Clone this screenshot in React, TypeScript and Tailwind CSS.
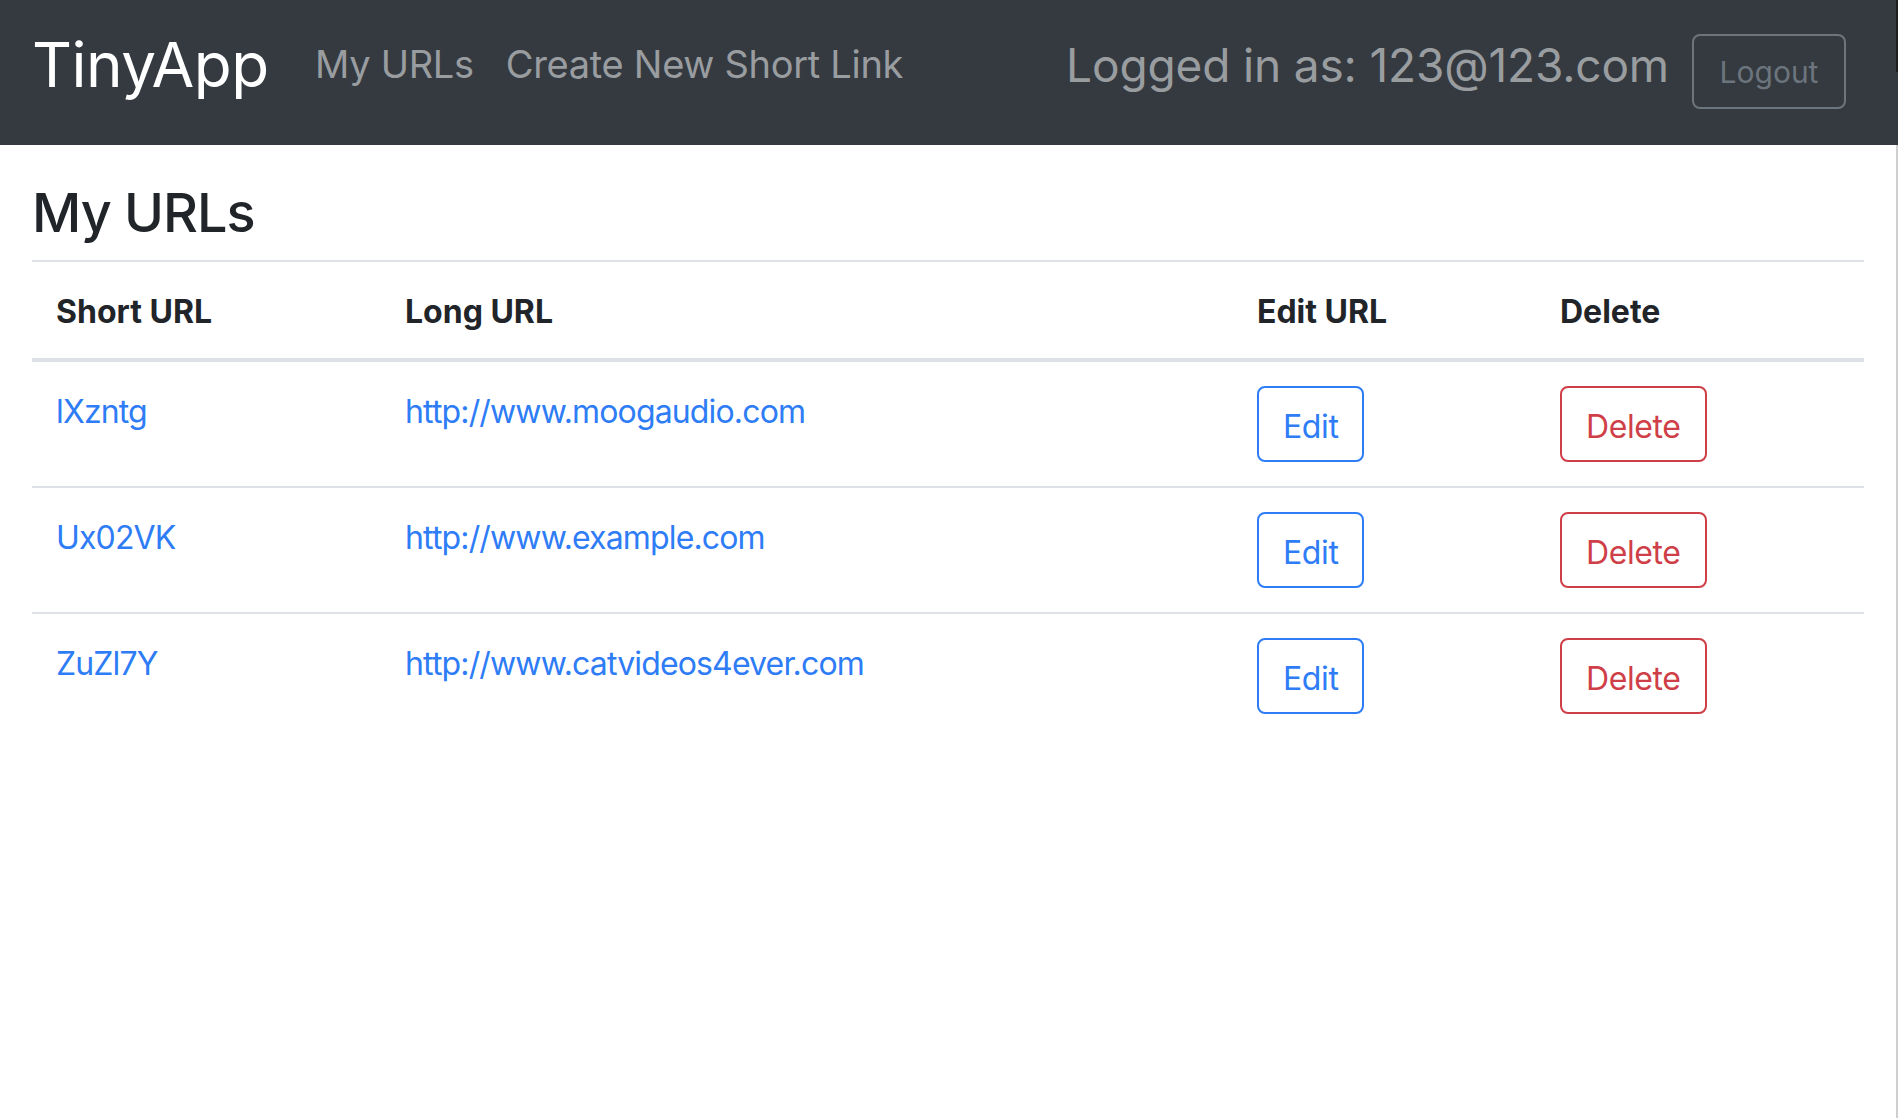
import React from "react";

const rows = [
  { short: "lXzntg", long: "http://www.moogaudio.com" },
  { short: "Ux02VK", long: "http://www.example.com" },
  { short: "ZuZl7Y", long: "http://www.catvideos4ever.com" },
];

export default function App() {
  return (
    <div className="flex min-h-screen w-full bg-white" style={{ fontFamily: "Inter, 'Open Sans', sans-serif" }}>
      <div className="flex-1 min-w-0">
        <nav className="flex h-[145px] items-start bg-[#343a40] pl-8 pr-[50px]">
          <a className="mt-[34px] w-[267px] text-[62px] leading-none tracking-[-0.5px] text-white">TinyApp</a>
          <a className="mt-[45px] px-4 text-[38px] leading-none tracking-[-0.3px] text-[#9a9da0]">My URLs</a>
          <a className="mt-[45px] px-4 text-[38px] leading-none tracking-[-0.3px] text-[#9a9da0]">Create New Short Link</a>
          <div className="ml-auto flex items-start">
            <span className="mt-[42px] text-[46px] leading-none tracking-[-0.15px] text-[#9a9da0]">
              Logged in as: 123@123.com
            </span>
            <button className="ml-[23px] mt-[34px] flex h-[75px] w-[154px] items-center justify-center rounded-[8px] border-2 border-[#6c757d] text-[30px] leading-none text-[#6c757d]">
              Logout
            </button>
          </div>
        </nav>
        <main className="px-8">
          <h1 className="mt-[41px] text-[54px] font-medium leading-none tracking-[-1px] text-[#212529]">My URLs</h1>
          <table className="mt-[20px] w-full table-fixed border-collapse text-[32px] leading-[48px] text-[#212529]">
            <colgroup>
              <col className="w-[349px]" />
              <col className="w-[852px]" />
              <col className="w-[303px]" />
              <col />
            </colgroup>
            <thead>
              <tr className="border-t-2 border-b-4 border-[#dee2e6]">
                <th className="px-6 pt-[26px] pb-[22px] text-left font-bold">Short URL</th>
                <th className="px-6 pt-[26px] pb-[22px] text-left font-bold">Long URL</th>
                <th className="px-6 pt-[26px] pb-[22px] text-left font-bold">Edit URL</th>
                <th className="px-6 pt-[26px] pb-[22px] text-left font-bold">Delete</th>
              </tr>
            </thead>
            <tbody>
              {rows.map((r, i) => (
                <tr key={r.short} className={i === 0 ? "" : "border-t-2 border-[#dee2e6]"}>
                  <td className="px-6 pt-[26px] pb-[22px] align-top tracking-[-0.85px]">
                    <a className="text-[#2e7cf6]">{r.short}</a>
                  </td>
                  <td className="px-6 pt-[26px] pb-[22px] align-top tracking-[-0.85px]">
                    <a className="text-[#2e7cf6]">{r.long}</a>
                  </td>
                  <td className="p-6 align-top">
                    <button className="flex h-[76px] items-center rounded-[8px] border-2 border-[#2e7cf6] px-[24px] pt-[5px] text-[32px] leading-[48px] tracking-[-0.4px] text-[#2e7cf6]">
                      Edit
                    </button>
                  </td>
                  <td className="p-6 align-top">
                    <button className="flex h-[76px] items-center rounded-[8px] border-2 border-[#cf3f48] px-[24px] pt-[5px] text-[32px] leading-[48px] tracking-[-0.4px] text-[#cf3f48]">
                      Delete
                    </button>
                  </td>
                </tr>
              ))}
            </tbody>
          </table>
        </main>
      </div>
      <div className="flex w-[2px] flex-col">
        <div className="h-[72px] bg-[#1e1e1e]" />
        <div className="h-[73px] bg-[#343a40]" />
        <div className="flex-1 bg-[#cfcfcf]" />
      </div>
    </div>
  );
}
